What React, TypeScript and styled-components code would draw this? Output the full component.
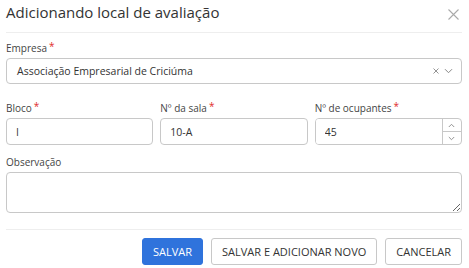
import styled, { createGlobalStyle } from "styled-components";

const GlobalStyle = createGlobalStyle`
  html, body {
    margin: 0;
    padding: 0;
    background: #fff;
  }
  body {
    font-family: "Open Sans", "Noto Sans", sans-serif;
    color: #333;
  }
`;

const Modal = styled.div`
  width: 456px;
  padding: 0 7px 0 6px;
`;

const Header = styled.header`
  height: 32px;
  display: flex;
  justify-content: space-between;
  align-items: flex-start;
  border-bottom: 1px solid #eee;
`;

const Title = styled.h3`
  margin: 0;
  padding-top: 2px;
  font-size: 15px;
  line-height: 20px;
  font-weight: 400;
  color: #333;
`;

const CloseButton = styled.button`
  margin: 8px 2px 0 0;
  padding: 0;
  width: 13px;
  height: 13px;
  border: none;
  background: none;
  display: flex;
  align-items: center;
  justify-content: center;
  cursor: pointer;
`;

const Body = styled.div`
  padding-top: 9px;
`;

const Field = styled.div<{ $mb?: number }>`
  display: flex;
  flex-direction: column;
  margin-bottom: ${(p) => p.$mb ?? 0}px;
  min-width: 0;
`;

const Label = styled.label`
  font-size: 10px;
  line-height: 13px;
  height: 13px;
  color: #444;
  margin-bottom: 3px;
`;

const Required = styled.span`
  color: #e02b2b;
  margin-left: 2px;
  font-size: 10px;
  line-height: 0;
  position: relative;
  top: -2px;
`;

const SelectBox = styled.div`
  height: 26px;
  box-sizing: border-box;
  border: 1px solid #c8c8c8;
  border-radius: 4px;
  display: flex;
  align-items: center;
  padding: 0 8px 0 10px;
  font-size: 10.5px;
`;

const SelectValue = styled.span`
  flex: 1;
  color: #333;
`;

const SelectIcons = styled.span`
  display: flex;
  align-items: center;
  gap: 5px;
`;

const Row = styled.div`
  display: grid;
  grid-template-columns: 1fr 1fr 1fr;
  gap: 7px;
`;

const Input = styled.input`
  height: 27px;
  box-sizing: border-box;
  border: 1px solid #c8c8c8;
  border-radius: 4px;
  padding: 0 9px;
  font-family: inherit;
  font-size: 10.5px;
  color: #333;
  width: 100%;
  outline: none;
`;

const NumberWrap = styled.div`
  height: 27px;
  box-sizing: border-box;
  border: 1px solid #c8c8c8;
  border-radius: 4px;
  display: flex;
  overflow: hidden;
`;

const NumberInput = styled.input`
  flex: 1;
  min-width: 0;
  border: none;
  padding: 0 9px;
  font-family: inherit;
  font-size: 10.5px;
  color: #333;
  outline: none;
`;

const Spinner = styled.div`
  width: 18px;
  border-left: 1px solid #c8c8c8;
  display: flex;
  flex-direction: column;
`;

const SpinButton = styled.span<{ $top?: boolean }>`
  flex: 1;
  display: flex;
  align-items: center;
  justify-content: center;
  border-bottom: ${(p) => (p.$top ? "1px solid #c8c8c8" : "none")};
`;

const TextArea = styled.textarea`
  height: 41px;
  box-sizing: border-box;
  border: 1px solid #c8c8c8;
  border-radius: 4px;
  resize: vertical;
  font-family: inherit;
  font-size: 10.5px;
  padding: 6px 9px;
  outline: none;
  display: block;
`;

const Footer = styled.footer`
  margin-top: 16px;
  border-top: 1px solid #eee;
  padding-top: 8px;
  display: flex;
  justify-content: flex-end;
  gap: 8px;
`;

const Button = styled.button<{ $primary?: boolean }>`
  height: 27px;
  padding: 0 10px;
  border-radius: 3px;
  font-family: inherit;
  font-size: 11px;
  text-transform: uppercase;
  cursor: pointer;
  border: 1px solid ${(p) => (p.$primary ? "#2f73dc" : "#c8c8c8")};
  background: ${(p) => (p.$primary ? "#2f73dc" : "#fff")};
  color: ${(p) => (p.$primary ? "#fff" : "#333")};
`;

const Chevron = ({ up = false }: { up?: boolean }) => (
  <svg width="7" height="5" viewBox="0 0 7 5">
    <path
      d={up ? "M0.8 4 L3.5 1.3 L6.2 4" : "M0.8 1 L3.5 3.7 L6.2 1"}
      fill="none"
      stroke="#888"
      strokeWidth="0.9"
    />
  </svg>
);

const App = () => {
  return (
    <>
      <GlobalStyle />
      <Modal>
        <Header>
          <Title>Adicionando local de avaliação</Title>
          <CloseButton aria-label="Fechar">
            <svg width="11" height="11" viewBox="0 0 11 11">
              <path d="M0.5 0.5 L10.5 10.5 M10.5 0.5 L0.5 10.5" stroke="#aaa" strokeWidth="1.1" />
            </svg>
          </CloseButton>
        </Header>
        <Body>
          <Field $mb={18}>
            <Label>
              Empresa<Required>*</Required>
            </Label>
            <SelectBox>
              <SelectValue>Associação Empresarial de Criciúma</SelectValue>
              <SelectIcons>
                <svg width="6" height="6" viewBox="0 0 6 6">
                  <path d="M0.5 0.5 L5.5 5.5 M5.5 0.5 L0.5 5.5" stroke="#888" strokeWidth="0.9" />
                </svg>
                <svg width="9" height="6" viewBox="0 0 9 6">
                  <path d="M1 1.2 L4.5 4.7 L8 1.2" fill="none" stroke="#888" strokeWidth="1" />
                </svg>
              </SelectIcons>
            </SelectBox>
          </Field>
          <Row>
            <Field $mb={11}>
              <Label>
                Bloco<Required>*</Required>
              </Label>
              <Input defaultValue="I" />
            </Field>
            <Field $mb={11}>
              <Label>
                Nº da sala<Required>*</Required>
              </Label>
              <Input defaultValue="10-A" />
            </Field>
            <Field $mb={11}>
              <Label>
                Nº de ocupantes<Required>*</Required>
              </Label>
              <NumberWrap>
                <NumberInput defaultValue="45" />
                <Spinner>
                  <SpinButton $top>
                    <Chevron up />
                  </SpinButton>
                  <SpinButton>
                    <Chevron />
                  </SpinButton>
                </Spinner>
              </NumberWrap>
            </Field>
          </Row>
          <Field>
            <Label>Observação</Label>
            <TextArea />
          </Field>
        </Body>
        <Footer>
          <Button $primary>Salvar</Button>
          <Button>Salvar e adicionar novo</Button>
          <Button>Cancelar</Button>
        </Footer>
      </Modal>
    </>
  );
};

export default App;
